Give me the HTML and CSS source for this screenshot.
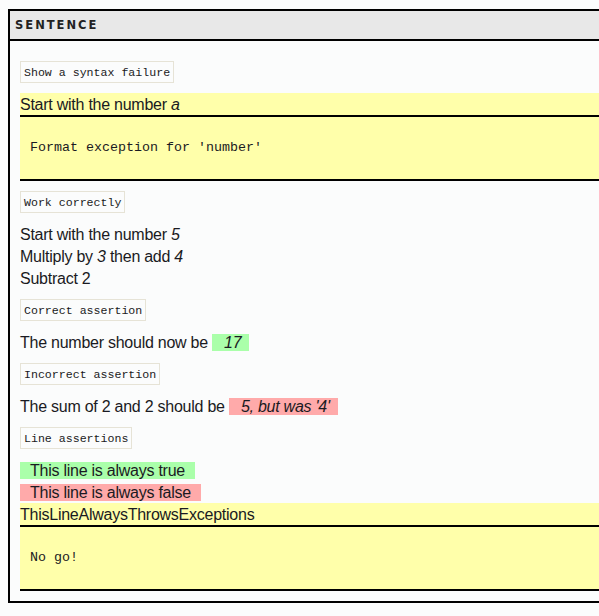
FILE: index.html
```html
<!DOCTYPE html>
<html>
<head>
<meta charset="utf-8">
<link rel="stylesheet" href="styles.css">
</head>
<body>
<div class="sentence">
  <div class="header">SENTENCE</div>
  <div class="content">
    <div class="label">Show a syntax failure</div>
    <div class="error">
      <div class="error-line">Start with the number <i>a</i></div>
      <pre class="error-detail">Format exception for 'number'</pre>
    </div>

    <div class="label">Work correctly</div>
    <div class="lines">
      <div>Start with the number <i>5</i></div>
      <div>Multiply by <i>3</i> then add <i>4</i></div>
      <div>Subtract 2</div>
    </div>

    <div class="label">Correct assertion</div>
    <div class="lines">
      <div>The number should now be <span class="result pass"><i>17</i></span></div>
    </div>

    <div class="label">Incorrect assertion</div>
    <div class="lines">
      <div>The sum of 2 and 2 should be <span class="result fail"><i>5, but was '4'</i></span></div>
    </div>

    <div class="label">Line assertions</div>
    <div class="lines lines-tight">
      <div><span class="line pass">This line is always true</span></div>
      <div><span class="line fail">This line is always false</span></div>
    </div>
    <div class="error error-tight">
      <div class="error-line">ThisLineAlwaysThrowsExceptions</div>
      <pre class="error-detail">No go!</pre>
    </div>
  </div>
</div>
</body>
</html>
```
FILE: styles.css
```css
html {
  overflow: hidden;
  background: #fbfcfc;
}
body {
  margin: 9px 0 0 8px;
  background: #fbfcfc;
  color: #1a1a22;
  font-family: "Liberation Sans", Arial, sans-serif;
  font-size: 16px;
  letter-spacing: -0.25px;
}
.sentence {
  width: 800px;
  border: 2px solid #000;
}
.header {
  background: #e8e8e8;
  border-bottom: 2px solid #000;
  height: 27px;
  padding-top: 1px;
  line-height: 27px;
  padding-left: 5px;
  font-family: "DejaVu Sans", Verdana, sans-serif;
  font-weight: bold;
  font-size: 11.5px;
  letter-spacing: 2px;
  color: #222;
}
.content {
  padding: 10px;
}
.label {
  width: fit-content;
  margin: 10px 0;
  border: 1px solid #e6e3d6;
  padding: 1px 3px 0;
  line-height: 19px;
  height: 19px;
  font-family: "Liberation Mono", "Courier New", monospace;
  font-size: 11.6px;
  letter-spacing: 0;
}
.error {
  margin: 10px 0;
  background: #ffffaa;
}
.error-tight {
  margin: 0;
}
.error-line {
  padding-top: 1px;
  line-height: 21px;
  height: 21px;
  border-bottom: 2px solid #000;
}
.error-detail {
  margin: 0;
  padding: 23px 10px 0 10px;
  height: 39px;
  line-height: 15px;
  border-bottom: 2px solid #000;
  font-family: "Liberation Mono", "Courier New", monospace;
  font-size: 13.33px;
  letter-spacing: 0;
}
.lines {
  margin: 10px 0;
}
.lines-tight {
  margin-bottom: 0;
}
.lines > div {
  padding-top: 1px;
  line-height: 21px;
  height: 21px;
}
.result {
  padding: 0 8px 0 12px;
}
.line {
  padding: 0 10px;
}
.pass {
  background: #aaffaa;
}
.fail {
  background: #ffaaaa;
}
```
